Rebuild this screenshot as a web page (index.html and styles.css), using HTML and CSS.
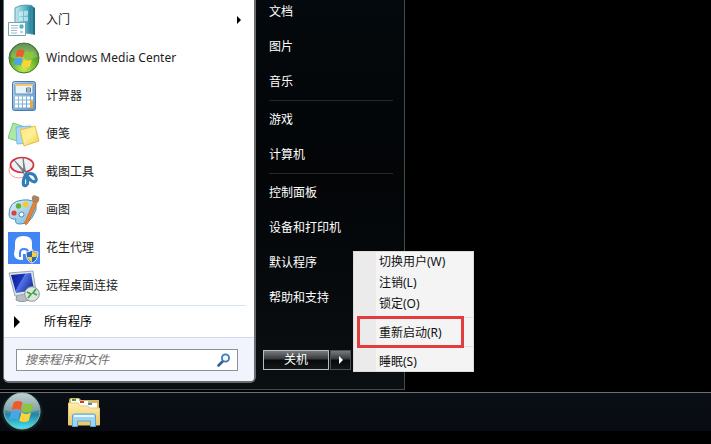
FILE: index.html
```html
<!DOCTYPE html>
<html lang="zh-CN">
<head>
<meta charset="utf-8">
<title>开始菜单</title>
<link rel="stylesheet" href="styles.css">
</head>
<body>
<svg class="defs" aria-hidden="true">
  <defs>
    <radialGradient id="green" cx=".5" cy=".85" r=".85"><stop offset="0" stop-color="#c4ee50"/><stop offset=".5" stop-color="#6ab62a"/><stop offset="1" stop-color="#2c6a20"/></radialGradient>
    <linearGradient id="teal" x1="0" x2="1"><stop offset="0" stop-color="#c4e9f0"/><stop offset=".65" stop-color="#58b2c6"/><stop offset="1" stop-color="#25798f"/></linearGradient>
    <linearGradient id="calc" x1="0" y1="0" x2="1" y2="1"><stop offset="0" stop-color="#b5d7f0"/><stop offset="1" stop-color="#5e96c6"/></linearGradient>
    <linearGradient id="yellow" x1="0" y1="0" x2="1" y2="1"><stop offset="0" stop-color="#ffe477"/><stop offset=".5" stop-color="#fff09a"/><stop offset="1" stop-color="#f2cb3c"/></linearGradient>
    <linearGradient id="palette" x1="0" y1="0" x2="1" y2="1"><stop offset="0" stop-color="#e0f3fb"/><stop offset="1" stop-color="#72b5da"/></linearGradient>
    <linearGradient id="screen" x1="0" y1="0" x2="1" y2=".5"><stop offset="0" stop-color="#0a1e8c"/><stop offset=".5" stop-color="#1c35c0"/><stop offset=".52" stop-color="#5876e5"/><stop offset="1" stop-color="#1735a8"/></linearGradient>
    <linearGradient id="orb" x1="0" y1="0" x2="0" y2="1"><stop offset="0" stop-color="#b4c4c4"/><stop offset=".45" stop-color="#6b929a"/><stop offset=".6" stop-color="#1f87a5"/><stop offset="1" stop-color="#4fe6f2"/></linearGradient>
    <radialGradient id="glow"><stop offset=".7" stop-color="#32805a" stop-opacity=".75"/><stop offset="1" stop-color="#103c2c" stop-opacity="0"/></radialGradient>
    <linearGradient id="folder" x1="0" y1="0" x2="0" y2="1"><stop offset="0" stop-color="#fff1ae"/><stop offset="1" stop-color="#e7c467"/></linearGradient>
    <symbol id="flag" viewBox="0 0 20 20">
      <path fill="#ee5a28" d="M3.500 3.200C5.800 1.700 8 2 10 3.200L8.500 9.200C6.500 8 4.300 7.900 2 9z"/>
      <path fill="#8dc63a" d="M11 3.700c2.400 1.300 4.800 1.300 7.400 0l-1.800 6c-2.300 1.300-4.700 1.200-7-.1z"/>
      <path fill="#4ba3ea" d="M1.700 10.200c2.200-1.300 4.400-1.100 6.500.1l-1.600 6C4.600 15.200 2.300 15 0 16.200z"/>
      <path fill="#fdd33c" d="M9.200 10.800c2.400 1.300 4.700 1.300 7.100 0l-1.700 6.100c-2.400 1.300-4.700 1.200-7-.1z"/>
    </symbol>
  </defs>
</svg>
<main class="desktop">
  <section class="start-menu" aria-label="开始菜单">
    <div class="left-pane">
      <ul class="programs">
        <li><a class="program" href="#"><svg class="icon" viewBox="0 0 32 32"><path d="M24 2l3 2v27l-4-1z" fill="#1b6f86"/><path d="M7 4Q13 0 24 1.500V30L7 27z" fill="url(#teal)" stroke="#4f9fb4"/><path d="M11 8l4-1v5l-4 .5zM16 7l4-.5v5l-4 .5zM11 13.500l4-.5v4h-4zM16 13l4-.5V17h-4z" fill="#e2f6fa" opacity=".65"/><path d="M.5 18.500h17v13H.5z" fill="#fff" stroke="#7aa6ab"/><path d="M3 21.500h7M3 24h7M3 26.500h6M3 29h6" stroke="#9bbac5"/><path d="M12 21h3v3h-3zM12 28h3" fill="#46b4d5" stroke="#46b4d5"/></svg><span>入门</span><i class="arrow more"></i></a></li>
        <li><a class="program" href="#"><svg class="icon" viewBox="0 0 32 32"><circle cx="16" cy="16" r="15" fill="url(#green)" stroke="#49712f"/><path d="M2.500 15a13.500 13.500 0 0127 0Q16 21 2.500 15z" fill="#fff" opacity=".25"/><use href="#flag" x="5" y="5" width="23" height="23"/></svg><span>Windows Media Center</span></a></li>
        <li><a class="program" href="#"><svg class="icon" viewBox="0 0 32 32"><rect x="4.500" y="1.500" width="23" height="29" rx="2" fill="url(#calc)" stroke="#4a7aab"/><path d="M7 4h18v10H7z" fill="#e8f2f7" stroke="#6090b8"/><path d="M7 4h18v2H7z" fill="#f5c772"/><path d="M18.500 8h4v4h-4zM18.500 10h4" fill="none" stroke="#5b7896"/><path d="M7 18h18M7 22h18M7 26h18" stroke="#fff" stroke-width="3" stroke-dasharray="3 1"/><path d="M22 21h3v7h-3z" fill="#efa43b"/></svg><span>计算器</span></a></li>
        <li><a class="program" href="#"><svg class="icon" viewBox="0 0 32 32"><path d="M5 5l12 4-5 15-12-4z" fill="#aee8a5" stroke="#77c879"/><path d="M8 9l15-1 1 17-15 1z" fill="#a9d8f7" stroke="#78b7e7"/><path d="M12 12l15-4 4 15-15 5z" fill="url(#yellow)" stroke="#e2c14c"/></svg><span>便笺</span></a></li>
        <li><a class="program" href="#"><svg class="icon" viewBox="0 0 32 32"><ellipse cx="11" cy="14" rx="10" ry="8" fill="#fff" stroke="#eca3a3"/><ellipse cx="14" cy="9" rx="11.500" ry="7.500" fill="#eef0f1" stroke="#cf3644" stroke-width="1.700"/><path d="M6 4l14 14-2 2L6 4zM15 2l3 16-2 1L15 2z" fill="#798890" stroke="#58666e" stroke-width=".6"/><circle cx="17" cy="17" r="1" fill="#fff"/><path d="M18.500 18q7-2 9 3 2 4-1 5-5-1-8-8zM17.500 19q3 5 2 9-2 3-4 1-1-5 2-10z" fill="#fff" stroke="#347eb8" stroke-width="3"/></svg><span>截图工具</span></a></li>
        <li><a class="program" href="#"><svg class="icon" viewBox="0 0 32 32"><path d="M1 20Q1 7 15 6q11-1 13 5 1 5-2 9-4 10-14 10-6 0-4-5-7 1-7-5z" fill="url(#palette)" stroke="#4a91bd"/><circle cx="10.500" cy="12" r="2.700" fill="#62ad3a"/><circle cx="17.500" cy="10.500" r="3" fill="#efcd37"/><circle cx="6" cy="19" r="2.600" fill="#d94235"/><circle cx="13.500" cy="20.500" r="2.500" fill="#fff" stroke="#4787bc"/><path d="M26 7l3 2-9 20q-2 3-3 1-1-2 1-4z" fill="#e98532" stroke="#c55b22" stroke-width=".6"/><path d="M25 8q-3-5 1-7l5 2q1 4-2 6z" fill="#ab835f"/></svg><span>画图</span></a></li>
        <li><a class="program" href="#"><svg class="icon" viewBox="0 0 32 32"><path d="M0 0h32v32H0z" fill="#4286f5"/><path d="M7 11Q7 4 15.500 4T24 11v5q1 3 1 6H15v6Q6 28 6 22l1-6z" fill="#fff"/><path d="M12 25v-4q0-4 4-4t4 3" fill="none" stroke="#4286f5" stroke-width="2"/><path d="M18 20q4 0 6-2 2 2 6 2 0 9-6 11-6-2-6-11z" fill="#2a67b5" stroke="#e7edf1"/><path d="M24 19q2 1.500 5 1.500 0 3-.7 4.500H24zM19 25h5v5q-4-2-5-5z" fill="#f8cf42"/></svg><span>花生代理</span></a></li>
        <li><a class="program" href="#"><svg class="icon" viewBox="0 0 32 32"><path d="M9 24h9l3 6q-8 3-13 0z" fill="#b6bdc4" stroke="#8d949b"/><path d="M1 3l24-2 3 21-21 4z" fill="#dce2e7" stroke="#99a7b2"/><path d="M3 5l20-2 3 17-18 3z" fill="url(#screen)"/><circle cx="24" cy="24" r="7.300" fill="#dbe6df" stroke="#8b9792"/><path d="M19 22l4 2-3 4M28 19l-3 4 4 2" fill="none" stroke="#45a04c" stroke-width="1.800"/></svg><span>远程桌面连接</span></a></li>
      </ul>
      <button class="all-programs" type="button"><i class="arrow big"></i><span>所有程序</span></button>
      <form class="search">
        <label class="search-box"><input type="text" placeholder="搜索程序和文件" aria-label="搜索程序和文件"><svg class="magnifier" viewBox="0 0 14 14"><path d="M1.500 12.500l4-4" stroke="#315f91" stroke-width="2.500" stroke-linecap="round"/><circle cx="8.500" cy="5" r="3.600" fill="#eff8ff" stroke="#3e7db2" stroke-width="1.800"/></svg></label>
      </form>
    </div>
    <nav class="right-pane">
      <ul class="places">
        <li><a href="#">文档</a></li>
        <li><a href="#">图片</a></li>
        <li><a href="#">音乐</a></li>
        <li class="divided"><a href="#">游戏</a></li>
        <li><a href="#">计算机</a></li>
        <li class="divided"><a href="#">控制面板</a></li>
        <li><a href="#">设备和打印机</a></li>
        <li><a href="#">默认程序</a></li>
        <li><a href="#">帮助和支持</a></li>
      </ul>
      <div class="power">
        <button class="shutdown" type="button">关机</button>
        <button class="options" type="button" aria-label="关机选项"><i class="arrow light"></i></button>
        <div class="power-menu" role="menu">
          <button type="button" role="menuitem">切换用户(W)</button>
          <button type="button" role="menuitem">注销(L)</button>
          <button type="button" role="menuitem">锁定(O)</button>
          <hr>
          <button class="marked" type="button" role="menuitem">重新启动(R)</button>
          <hr>
          <button type="button" role="menuitem">睡眠(S)</button>
        </div>
      </div>
    </nav>
  </section>
  <footer class="taskbar">
    <button class="task" type="button" aria-label="开始"><svg class="orb" viewBox="0 0 44 40"><ellipse cx="22" cy="20" rx="22" ry="21" fill="url(#glow)"/><circle cx="22" cy="19" r="18" fill="url(#orb)" stroke="#8db4c0"/><path d="M5 18a17 17 0 0134 0q-17 7-34 0z" fill="#fff" opacity=".2"/><use href="#flag" x="9" y="6" width="27" height="27"/></svg></button>
    <button class="task" type="button" aria-label="资源管理器"><svg class="explorer" viewBox="0 0 32 30"><path d="M1 4q0-3 2-3h8l2 2h18v24H1z" fill="#d8b763"/><path d="M3 2h8v6H3zM11 4h9v6h-9zM20 6h9v6h-9z" fill="#fff"/><path d="M4 2h4v2H4z" fill="#4b9a39"/><path d="M12 4h4v2h-4z" fill="#d23c2c"/><path d="M20 6h4v2h-4z" fill="#3b8ed0"/><path d="M.5 6H10l2 3h8l2 2h9.500v17H.5z" fill="url(#folder)" stroke="#e6c978"/><path d="M4.500 29.500V19q0-2 2-2h19q2 0 2 2v10.500h-5V24h-13v5.500z" fill="#9dd4f2" stroke="#5da6d6"/><path d="M6 19h20" stroke="#e5f7ff" stroke-width="2"/></svg></button>
  </footer>
</main>
</body>
</html>
```
FILE: styles.css
```css
* { box-sizing: border-box; }
body {
  margin: 0;
  background: #000;
  font-family: "Noto Sans", "Noto Sans CJK SC", sans-serif;
  font-size: 12px;
  line-height: 20px;
  color: #1c1c1c;
}
ul { list-style: none; margin: 0; padding: 0; }
a { color: inherit; text-decoration: none; }
button { font: inherit; color: inherit; padding: 0; border: 0; background: none; }
.defs { position: absolute; width: 0; height: 0; }
.desktop { display: flex; flex-direction: column; justify-content: flex-end; min-height: 100vh; }

.start-menu {
  display: flex;
  align-self: flex-start;
  width: 405px;
  margin-bottom: 2px;
  padding: 0 0 6px 3px;
  border: solid #454a4c;
  border-width: 0 1px 1px 0;
  background: linear-gradient(#04090d, #030507 45%, #0a0f12);
}
.left-pane {
  display: flex;
  flex-direction: column;
  width: 253px;
  border: solid #686d72;
  border-width: 0 2px 2px 1px;
  border-radius: 0 0 6px 6px;
  background: #fff;
  overflow: hidden;
}
.programs { margin: 0 8px 0 12px; padding-top: 1px; border-bottom: 1px solid #d5e4f0; }
.program { display: flex; align-items: center; gap: 6px; height: 38px; margin-left: -8px; }
.icon { width: 32px; height: 32px; flex: none; }
.arrow { width: 0; height: 0; border: solid transparent; border-width: 4px 0 4px 4px; border-left-color: #000; }
.more { margin: 0 5px 0 auto; }
.big { border-width: 6px 0 6px 6px; border-left-color: #000; }
.light { border-left-color: #fff; }
.all-programs { display: flex; align-items: center; gap: 24px; height: 31px; padding-left: 10px; color: #000; }
.search { padding: 11px 16px 10px 12px; background: #f1f4fc; border-top: 1px solid #cfdbea; }
.search-box {
  display: flex;
  align-items: center;
  height: 22px;
  padding: 0 6px 0 8px;
  border: 1px solid #8b919b;
  background: #fff;
}
.search-box input {
  flex: 1;
  min-width: 0;
  padding: 0;
  border: 0;
  outline: 0;
  background: none;
  font: inherit;
  font-style: italic;
}
.search-box input::placeholder { color: #6d6d6d; opacity: 1; }
.magnifier { width: 14px; height: 14px; }

.right-pane { flex: 1; display: flex; flex-direction: column; padding: 0 7px 13px; color: #fff; }
.places { margin: -6px 4px 0 6px; }
.places a { display: block; line-height: 35px; }
.divided { margin-top: 1px; padding-top: 1px; border-top: 1px solid #25282a; }
.power { position: relative; display: flex; gap: 1px; margin-top: auto; }
.shutdown, .options {
  height: 20px;
  border: 1px solid #b9bcbe;
  background: linear-gradient(#777b7e, #34383b 45%, #07090a 50%, #141719);
}
.shutdown { width: 66px; line-height: 18px; }
.options { display: grid; place-items: center; width: 21px; border-color: #4b4f52; }
.power-menu {
  position: absolute;
  left: 90px;
  bottom: -2px;
  display: flex;
  flex-direction: column;
  width: 121px;
  background: linear-gradient(90deg, #ebebeb 23px, #f4f4f4 23px);
  box-shadow: inset 0 0 0 1px #dcdcdc;
  color: #111;
}
.power-menu button { height: 21px; padding-left: 26px; text-align: left; }
.power-menu hr { width: 97px; margin: 3px 0 4px auto; border: 0; border-top: 1px solid #dedede; }
.power-menu .marked { position: relative; }
.marked::after {
  content: "";
  position: absolute;
  inset: -6px 10px -5px 4px;
  border: 3px solid #e33c3f;
}

.taskbar {
  display: flex;
  align-items: center;
  gap: 23px;
  height: 39px;
  margin-bottom: 13px;
  border-top: 1px solid #6b7073;
  background: linear-gradient(#0a0f15, #080c12);
}
.task { display: flex; }
.orb { width: 44px; height: 40px; }
.explorer { width: 34px; height: 30px; }
```
